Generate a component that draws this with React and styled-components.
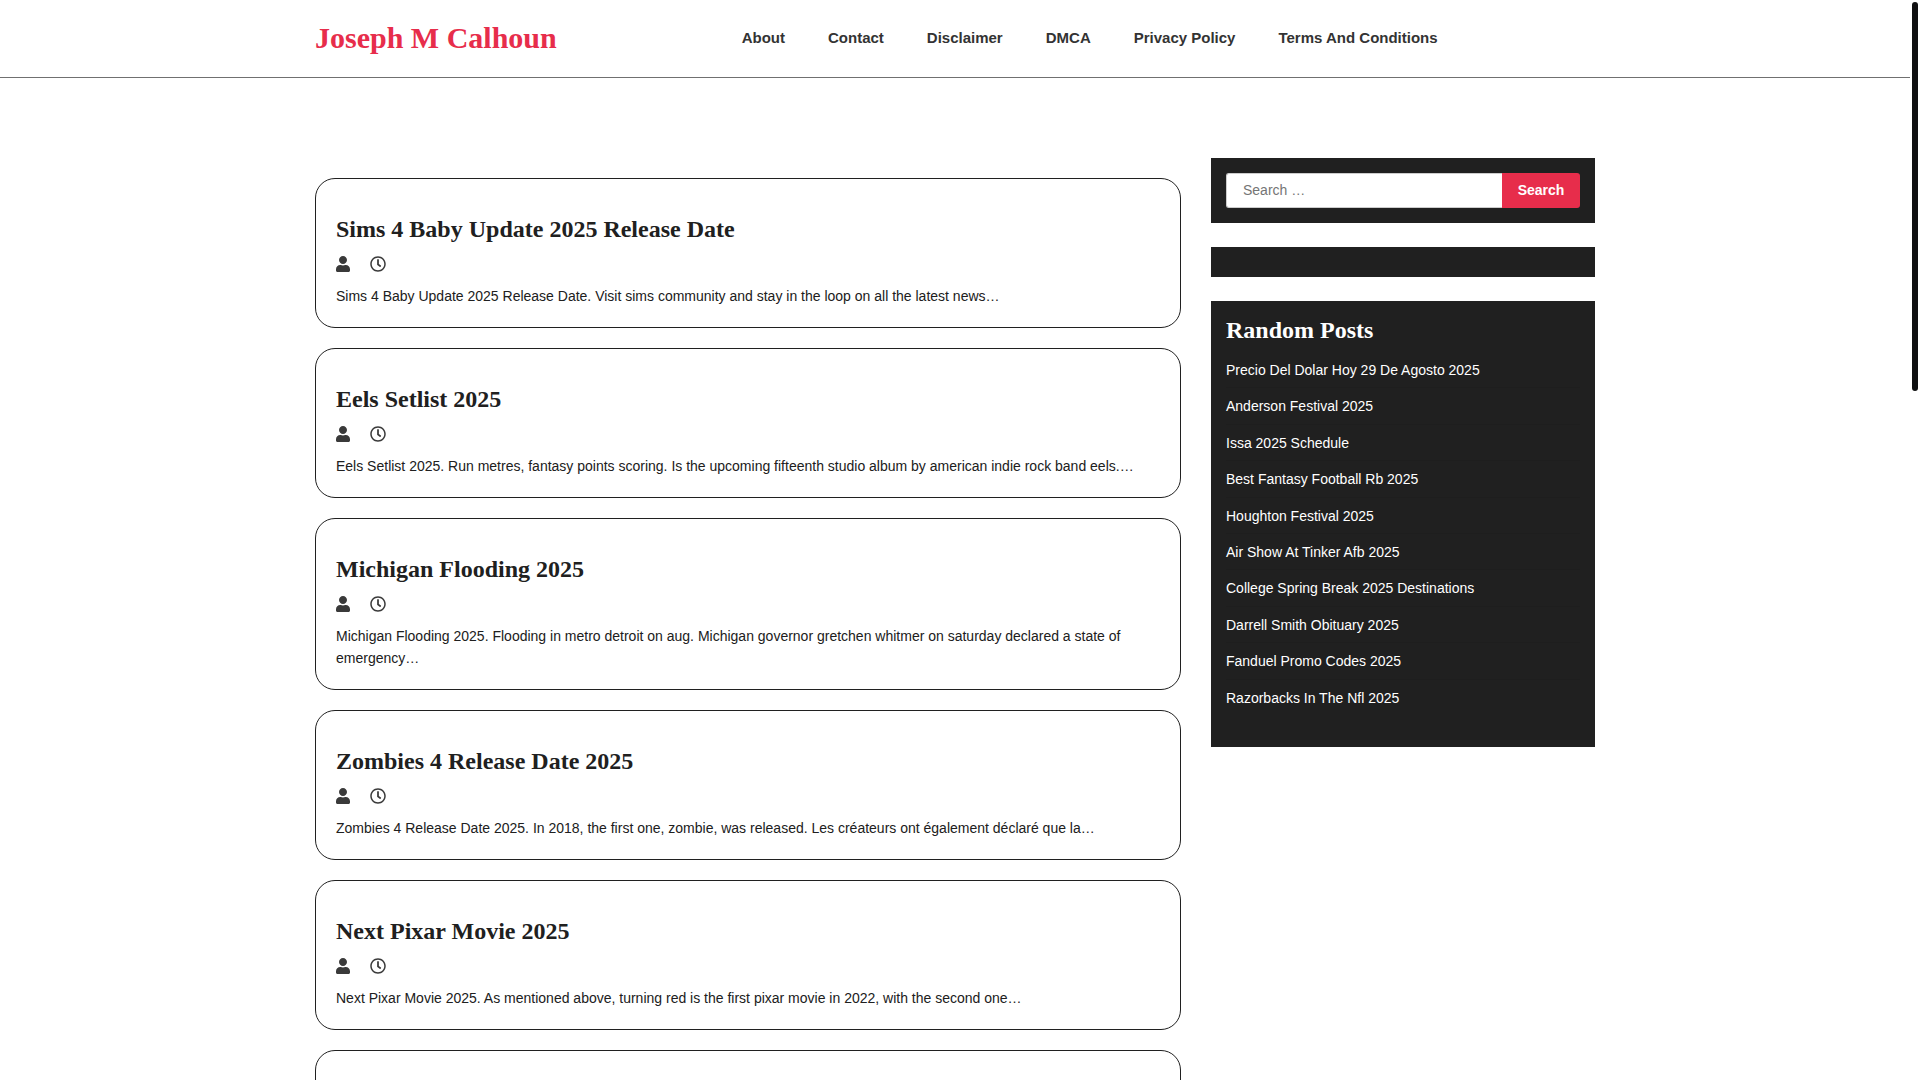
import React from "react";
import styled, { createGlobalStyle } from "styled-components";
import { FaUser, FaRegClock } from "react-icons/fa";

const GlobalStyle = createGlobalStyle`
  *, *::before, *::after { box-sizing: border-box; }
  html { scrollbar-width: none; }
  body {
    margin: 0;
    background: #fff;
    color: #202020;
    font-family: "Liberation Sans", Arial, sans-serif;
    font-size: 14px;
    line-height: 22px;
  }
  h1, h2, h3, p, ul { margin: 0; padding: 0; }
  a { color: inherit; text-decoration: none; }
`;

const serif = `"Liberation Serif", "Times New Roman", serif`;

const Page = styled.div`
  padding-right: 10px;
`;

const Header = styled.header`
  border-bottom: 1px solid #707070;
`;

const Container = styled.div`
  max-width: 1280px;
  margin: 0 auto;
`;

const HeaderInner = styled(Container)`
  display: grid;
  grid-template-columns: 1fr 2fr;
  align-items: center;
  min-height: 77px;
  padding-bottom: 2px;
`;

const SiteTitle = styled.h1`
  font: bold 30px/40px ${serif};
  color: #e72d4b;
`;

const Nav = styled.nav`
  display: flex;
  gap: 43px;
  font-size: 15px;
  font-weight: bold;
  color: #333;
`;

const Content = styled(Container)`
  display: grid;
  grid-template-columns: minmax(0, 1fr) 384px;
  gap: 30px;
  align-items: start;
  padding-top: 80px;
`;

const Posts = styled.main`
  display: flex;
  flex-direction: column;
  gap: 20px;
  padding: 20px 0;
`;

const Card = styled.article`
  display: flex;
  flex-direction: column;
  gap: 13px;
  padding: 36px 20px 20px;
  border: 1px solid #202020;
  border-radius: 20px;
`;

const CardTitle = styled.h2`
  font: bold 24px/28px ${serif};
`;

const Meta = styled.div`
  display: flex;
  gap: 20px;
  font-size: 16px;
  line-height: 16px;
  color: #3a3a3a;

  svg { display: block; }
`;

const UserIcon = styled(FaUser)`
  width: 14px;
`;

const Sidebar = styled.aside`
  display: flex;
  flex-direction: column;
  gap: 24px;
`;

const Widget = styled.section`
  min-height: 30px;
  padding: 15px;
  background: #202020;
  color: #fff;
`;

const SearchForm = styled.form`
  display: flex;
  height: 35px;
`;

const SearchInput = styled.input`
  flex: 1;
  min-width: 0;
  padding: 0 16px 1px;
  border: 1px solid #ccc;
  border-right: 0;
  border-radius: 3px 0 0 3px;
  background: #fff;
  color: #202020;
  font: 14px "Liberation Sans", Arial, sans-serif;

  &::placeholder { color: #757575; }
`;

const SearchButton = styled.button`
  min-width: 78px;
  padding: 0 15px 1px;
  border: 0;
  border-radius: 0 3px 3px 0;
  background: #e72d4b;
  color: #fff;
  font: bold 14px "Liberation Sans", Arial, sans-serif;
`;

const WidgetTitle = styled.h3`
  font: bold 24px/28px ${serif};
`;

const LinkList = styled.ul`
  padding: 8px 0 16px;
  list-style: none;
  line-height: 1.6;
`;

const LinkItem = styled.li`
  padding: 7px 0 6px;
  border-bottom: 1px solid #1e1e1e;

  &:last-child { border-bottom-color: transparent; }
`;

const ScrollThumb = styled.div`
  position: fixed;
  top: 2px;
  right: 2px;
  width: 6px;
  height: 36%;
  border-radius: 3px;
  background: #0f1011;
`;

const pages = ["About", "Contact", "Disclaimer", "DMCA", "Privacy Policy", "Terms And Conditions"];

const posts = [
  ["Sims 4 Baby Update 2025 Release Date", "Sims 4 Baby Update 2025 Release Date. Visit sims community and stay in the loop on all the latest news…"],
  ["Eels Setlist 2025", "Eels Setlist 2025. Run metres, fantasy points scoring. Is the upcoming fifteenth studio album by american indie rock band eels.…"],
  ["Michigan Flooding 2025", "Michigan Flooding 2025. Flooding in metro detroit on aug. Michigan governor gretchen whitmer on saturday declared a state of emergency…"],
  ["Zombies 4 Release Date 2025", "Zombies 4 Release Date 2025. In 2018, the first one, zombie, was released. Les créateurs ont également déclaré que la…"],
  ["Next Pixar Movie 2025", "Next Pixar Movie 2025. As mentioned above, turning red is the first pixar movie in 2022, with the second one…"],
];

const randomPosts = [
  "Precio Del Dolar Hoy 29 De Agosto 2025",
  "Anderson Festival 2025",
  "Issa 2025 Schedule",
  "Best Fantasy Football Rb 2025",
  "Houghton Festival 2025",
  "Air Show At Tinker Afb 2025",
  "College Spring Break 2025 Destinations",
  "Darrell Smith Obituary 2025",
  "Fanduel Promo Codes 2025",
  "Razorbacks In The Nfl 2025",
];

function Post({ title, excerpt }) {
  return (
    <Card>
      {title && <CardTitle><a href="#">{title}</a></CardTitle>}
      <Meta><UserIcon /><FaRegClock /></Meta>
      <p>{excerpt}</p>
    </Card>
  );
}

export default function App() {
  return (
    <Page>
      <GlobalStyle />
      <Header>
        <HeaderInner>
          <SiteTitle><a href="#">Joseph M Calhoun</a></SiteTitle>
          <Nav>
            {pages.map((name) => <a href="#" key={name}>{name}</a>)}
          </Nav>
        </HeaderInner>
      </Header>
      <Content>
        <Posts>
          {posts.map(([title, excerpt]) => (
            <Post key={title} title={title} excerpt={excerpt} />
          ))}
          <Post />
        </Posts>
        <Sidebar>
          <Widget>
            <SearchForm role="search" onSubmit={(e) => e.preventDefault()}>
              <SearchInput type="search" aria-label="Search for:" placeholder="Search …" />
              <SearchButton type="submit">Search</SearchButton>
            </SearchForm>
          </Widget>
          <Widget />
          <Widget>
            <WidgetTitle>Random Posts</WidgetTitle>
            <LinkList>
              {randomPosts.map((name) => (
                <LinkItem key={name}><a href="#">{name}</a></LinkItem>
              ))}
            </LinkList>
          </Widget>
        </Sidebar>
      </Content>
      <ScrollThumb />
    </Page>
  );
}
